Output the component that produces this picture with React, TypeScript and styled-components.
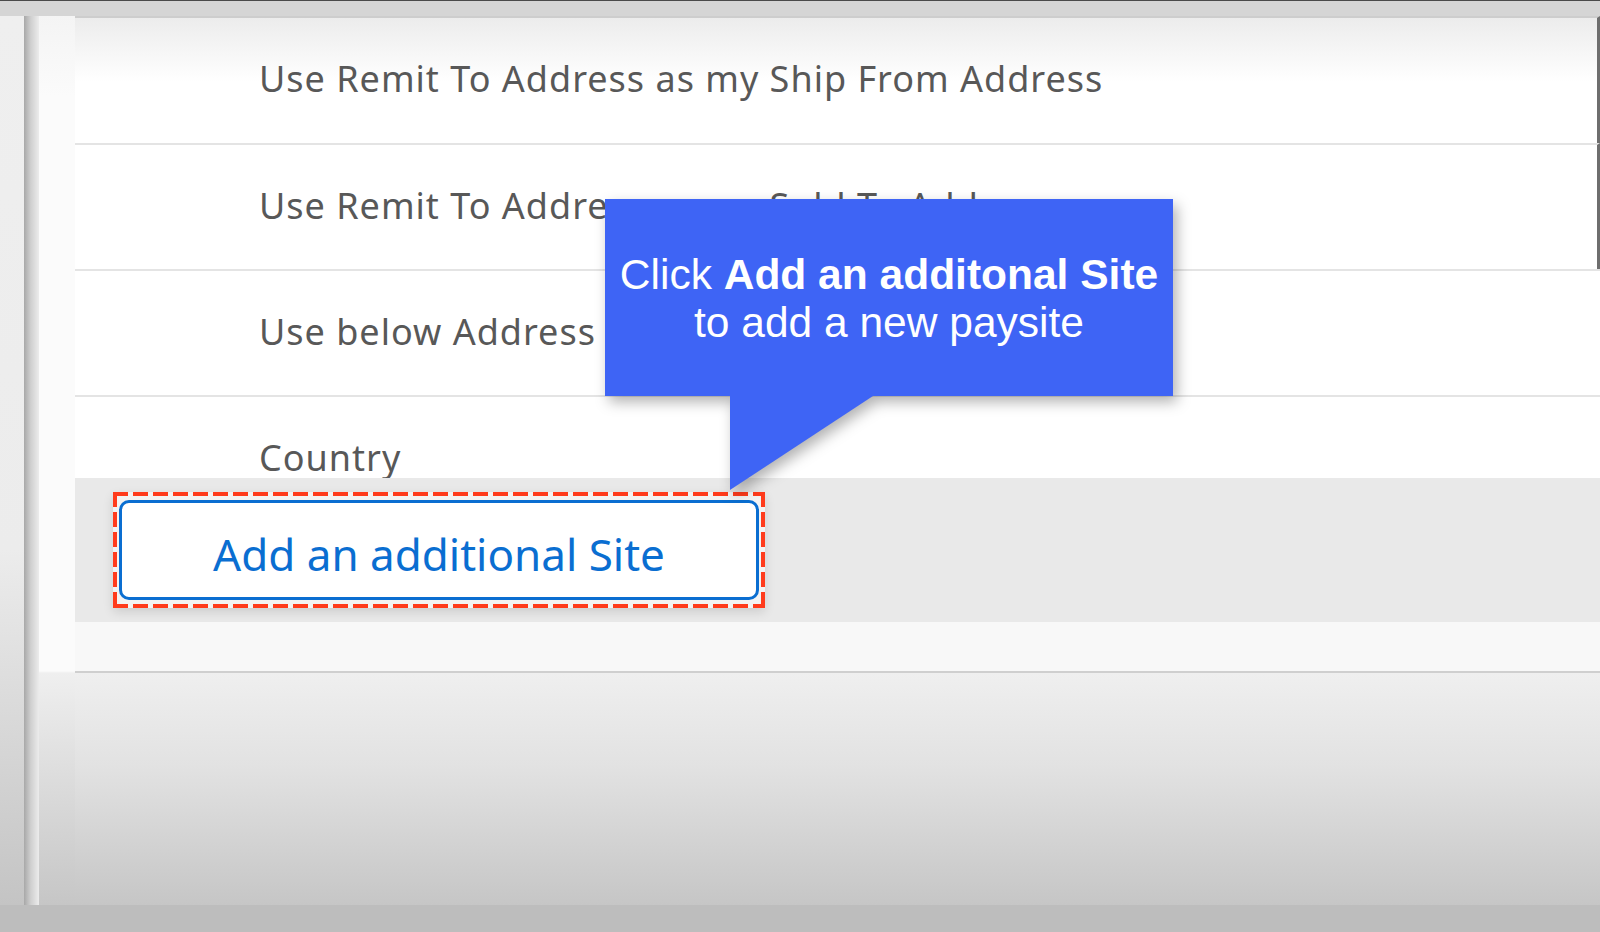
import React from "react";
import styled, { createGlobalStyle } from "styled-components";

const GlobalStyle = createGlobalStyle`
  html, body {
    margin: 0;
    padding: 0;
    background: #d6d6d6;
  }
  * {
    box-sizing: border-box;
  }
`;

const Screen = styled.div`
  position: relative;
  width: 1600px;
  height: 932px;
  overflow: hidden;
  display: flex;
  flex-direction: column;
  font-family: "Noto Sans", "Open Sans", sans-serif;
`;

const TopStrip = styled.div`
  height: 16px;
  flex: none;
  background: #d5d5d5;
  border-top: 1px solid #4a4a4a;
`;

const Stage = styled.div`
  flex: 1;
  display: flex;
  min-height: 0;
`;

const Gutter = styled.div`
  width: 24px;
  flex: none;
  background: linear-gradient(180deg, #efefef 0%, #ececec 60%, #c4c4c4 100%);
`;

const Rail = styled.div`
  width: 15px;
  flex: none;
  background: linear-gradient(90deg, #a8a8a8 0%, #cfcfcf 45%, #ececec 100%);
`;

const Margin = styled.div`
  width: 36px;
  flex: none;
  background: linear-gradient(
    180deg,
    #f4f4f4 0px,
    #fbfbfb 80px,
    #fbfbfb 655px,
    #efefef 657px,
    #c6c6c6 100%
  );
`;

const Content = styled.div`
  flex: 1;
  display: flex;
  flex-direction: column;
  min-width: 0;
`;

const Row = styled.div<{ $first?: boolean; $edge?: boolean; $short?: boolean }>`
  height: ${(p) => (p.$short ? 83 : p.$first ? 127 : 126)}px;
  flex: none;
  padding: 39px 0 0 184px;
  border-top: 2px solid ${(p) => (p.$first ? "#cdcdcd" : "#e4e4e4")};
  border-right: ${(p) => (p.$edge ? "3px solid #6e6e6e" : "none")};
  background: ${(p) =>
    p.$first ? "linear-gradient(180deg, #ececec 0px, #ffffff 64px)" : "#ffffff"};
  color: #585858;
  font-size: 36px;
  letter-spacing: 1px;
  line-height: 44px;
  white-space: nowrap;
`;

const ActionBar = styled.div`
  height: 144px;
  flex: none;
  background: #e9e9e9;
  padding: 14px 0 0 38px;
`;

const Highlight = styled.div`
  display: inline-flex;
  padding: 8px 6px;
  background:
    repeating-linear-gradient(90deg, #ff3b1c 0 15px, transparent 15px 20px) top / 100% 4px no-repeat,
    repeating-linear-gradient(90deg, #ff3b1c 0 15px, transparent 15px 20px) bottom / 100% 4px no-repeat,
    repeating-linear-gradient(180deg, #ff3b1c 0 15px, transparent 15px 20px) left / 4px 100% no-repeat,
    repeating-linear-gradient(180deg, #ff3b1c 0 15px, transparent 15px 20px) right / 4px 100% no-repeat,
    #f3f3f3;
  box-shadow: 0 4px 10px rgba(0, 0, 0, 0.12);
`;

const AddButton = styled.button`
  width: 640px;
  height: 100px;
  background: #ffffff;
  border: 3px solid #0a6ed1;
  border-radius: 10px;
  color: #0a6ed1;
  font-family: "Noto Sans", "Open Sans", sans-serif;
  font-size: 44px;
  cursor: pointer;
  padding: 8px 0 0;
`;

const Gap = styled.div`
  height: 51px;
  flex: none;
  background: #f8f8f8;
  border-bottom: 2px solid #cfcfcf;
`;

const Shade = styled.div`
  flex: 1;
  background: linear-gradient(180deg, #efefef 0%, #e2e2e2 40%, #c6c6c6 100%);
`;

const BottomStrip = styled.div`
  height: 27px;
  flex: none;
  background: #bdbdbd;
`;

const Callout = styled.div`
  position: absolute;
  left: 605px;
  top: 199px;
  width: 568px;
  filter: drop-shadow(4px 6px 7px rgba(0, 0, 0, 0.3));
`;

const Bubble = styled.div`
  position: relative;
  height: 197px;
  background: #3e64f5;
  color: #ffffff;
  font-family: "Liberation Sans", Arial, sans-serif;
  font-size: 42.5px;
  line-height: 48px;
  display: flex;
  flex-direction: column;
  align-items: center;
  justify-content: center;
  text-align: center;
  padding-top: 3px;

  b {
    font-weight: 700;
  }
`;

const Tail = styled.div`
  position: absolute;
  top: 100%;
  left: 125px;
  width: 143px;
  height: 94px;
  background: #3e64f5;
  clip-path: polygon(0 0, 100% 0, 0 100%);
`;

export default function App() {
  return (
    <>
      <GlobalStyle />
      <Screen>
        <TopStrip />
        <Stage>
          <Gutter />
          <Rail />
          <Margin />
          <Content>
            <Row $first $edge>Use Remit To Address as my Ship From Address</Row>
            <Row $edge>Use Remit To Address as my Sold To Address</Row>
            <Row>Use below Address</Row>
            <Row $short>Country</Row>
            <ActionBar>
              <Highlight>
                <AddButton>Add an additional Site</AddButton>
              </Highlight>
            </ActionBar>
            <Gap />
            <Shade />
          </Content>
        </Stage>
        <BottomStrip />
        <Callout>
          <Bubble>
            <div>
              Click <b>Add an additonal Site</b>
            </div>
            <div>to add a new paysite</div>
            <Tail />
          </Bubble>
        </Callout>
      </Screen>
    </>
  );
}
